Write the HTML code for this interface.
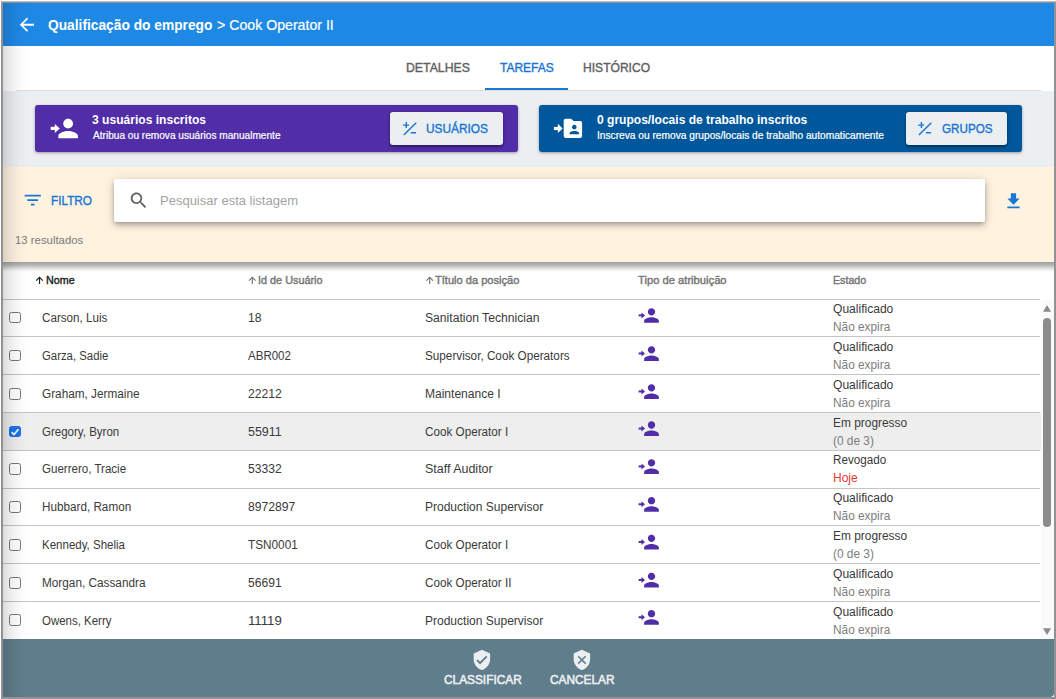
<!DOCTYPE html>
<html lang="pt"><head><meta charset="utf-8"><title>Qualificação do emprego</title>
<style>
html,body{margin:0;padding:0}
body{width:1056px;height:699px;overflow:hidden;background:#fff;position:relative;font-family:"Liberation Sans",sans-serif}
.a{position:absolute}
.t{position:absolute;white-space:nowrap;transform-origin:0 50%}
.m{-webkit-text-stroke:0.4px currentColor}
.card{position:absolute;top:105px;height:46.5px;border-radius:3px;box-shadow:0 1px 3px rgba(0,0,0,.35)}
.btn{position:absolute;top:112px;height:32.5px;border-radius:3px;background:#eceff1;box-shadow:0 2px 2px rgba(0,0,0,.3),0 1px 4px rgba(0,0,0,.2)}
.cb{position:absolute;left:9px;width:9.7px;height:9.7px;border:1px solid #767676;border-radius:2.5px;background:#fff}
.cb.on{background:#1a73e8;border-color:#1a73e8}
.line{position:absolute;left:3px;width:1037px;height:1px;background:#c4c4c4}
</style></head><body>

<div class="a" style="left:1px;top:1px;width:1055px;height:698px;background:#919196"></div>
<div class="a" style="left:1px;top:1px;width:1055px;height:1px;background:#b9babd"></div>
<div class="a" id="app" style="left:3px;top:3px;width:1051px;height:694px;background:#fff;overflow:hidden"></div>
<div class="a" style="left:3px;top:3px;width:1051px;height:43px;background:#1e88e5"></div>
<svg class="a" style="left:0;top:0" width="1056" height="699" viewBox="0 0 1056 699"><path fill="#fff" transform="translate(16.22,14.07) scale(0.89)" d="M20 11H7.830l5.590-5.590L12 4l-8 8 8 8 1.410-1.410L7.830 13H20v-2z"/></svg>
<div class="a" style="left:16px;top:90px;width:1025px;height:1px;background:#dedede"></div>
<div class="a" style="left:485px;top:88px;width:83px;height:2.4px;background:#1976d2"></div>
<div class="a" style="left:3px;top:91px;width:1051px;height:76px;background:#eceff1"></div>
<div class="card" style="left:35px;width:483px;background:#512da8"></div>
<div class="card" style="left:539px;width:483px;background:#01579b"></div>
<div class="btn" style="left:390px;width:113px"></div>
<div class="btn" style="left:906px;width:101px"></div>
<svg class="a" style="left:0;top:0" width="1056" height="699" viewBox="0 0 1056 699"><g stroke="#1976d2" stroke-width="1.45" fill="none" transform="translate(0,0)"><path d="M403 125.1H409.1M406.3 122V128.1M403.8 135.1L416.2 122.7M410.8 132.7H416"/></g></svg>
<svg class="a" style="left:0;top:0" width="1056" height="699" viewBox="0 0 1056 699"><g stroke="#1976d2" stroke-width="1.45" fill="none" transform="translate(515.1,0)"><path d="M403 125.1H409.1M406.3 122V128.1M403.8 135.1L416.2 122.7M410.8 132.7H416"/></g></svg>
<svg class="a" style="left:0;top:0" width="1056" height="699" viewBox="0 0 1056 699"><g fill="#fff"><path transform="translate(53.45,113.80) scale(1.225)" d="M12 12c2.21 0 4-1.79 4-4s-1.79-4-4-4-4 1.79-4 4 1.790 4 4 4zm0 2c-2.670 0-8 1.340-8 4v2h16v-2c0-2.660-5.330-4-8-4z"/><rect x="50.70" y="126.80" width="4.90" height="3.20"/><path d="M54.80 123.90L59.80 128.40L54.80 132.90z"/></g></svg>
<svg class="a" style="left:0;top:0" width="1056" height="699" viewBox="0 0 1056 699"><g fill="#fff"><path fill-rule="evenodd" d="M565.5 118.8H570.6Q571.4 118.8 572 119.4L573.5 120.9H580.3Q582.1 120.9 582.1 122.7V136.1Q582.1 137.9 580.3 137.9H565.5Q563.7 137.9 563.7 136.100V120.6Q563.7 118.8 565.5 118.8ZM574.3 124.8a2.300 2.300 0 1 0 0.001 0ZM569.6 134.2V133.3C569.6 131.8 572.7 131.1 574.3 131.1S579.1 131.8 579.1 133.3V134.2Z"/><rect x="553.9" y="126.9" width="4.8" height="3.2"/><path d="M557.9 123.8L562.6 128.4L557.9 133z"/></g></svg>
<div class="a" style="left:3px;top:167px;width:1051px;height:95px;background:#fff3e0"></div>
<div class="a" style="left:3px;top:262px;width:1051px;height:10px;background:linear-gradient(to bottom,rgba(0,0,0,.38),rgba(0,0,0,.29) 30%,rgba(0,0,0,.19) 52%,rgba(0,0,0,.08) 75%,rgba(0,0,0,.02) 92%,rgba(0,0,0,0))"></div>
<div class="a" style="left:114px;top:179px;width:871px;height:43px;background:#fff;border-radius:2px;box-shadow:0 2px 4px -1px rgba(0,0,0,.22),0 4px 6px 0 rgba(0,0,0,.16),0 1px 12px 0 rgba(0,0,0,.14)"></div>
<svg class="a" style="left:0;top:0" width="1056" height="699" viewBox="0 0 1056 699"><path fill="#1976d2" transform="translate(21.90,189.30) scale(0.9)" d="M10 18h4v-2h-4v2zM3 6v2h18V6H3zm3 7h12v-2H6v2z"/></svg>
<svg class="a" style="left:0;top:0" width="1056" height="699" viewBox="0 0 1056 699"><path fill="#616161" transform="translate(128.10,189.85) scale(0.883)" d="M15.5 14h-.79l-.28-.27C15.41 12.59 16 11.11 16 9.5 16 5.91 13.09 3 9.5 3S3 5.91 3 9.5 5.91 16 9.5 16c1.61 0 3.09-.59 4.23-1.57l.27.28v.79l5 4.99L20.49 19l-4.99-5zm-6 0C7.01 14 5 11.99 5 9.5S7.01 5 9.5 5 14 7.01 14 9.5 11.99 14 9.500 14z"/></svg>
<svg class="a" style="left:0;top:0" width="1056" height="699" viewBox="0 0 1056 699"><path fill="#1976d2" transform="translate(1002.90,190.66) scale(0.88)" d="M19 9h-4V3H9v6H5l7 7 7-7zM5 18v2h14v-2H5z"/></svg>
<svg class="a" style="left:0;top:0" width="1056" height="699" viewBox="0 0 1056 699"><path d="M39.5 284V277.3M36.2 280.7L39.5 277.3L42.8 280.7" stroke="#212121" stroke-width="1.15" fill="none"/><path d="M252.3 284V277.3M249.0 280.7L252.3 277.3L255.60000000000002 280.7" stroke="#757575" stroke-width="1.15" fill="none"/><path d="M429.7 284V277.3M426.4 280.7L429.7 277.3L433.0 280.7" stroke="#757575" stroke-width="1.15" fill="none"/></svg>
<div class="line" style="top:299px"></div>
<div class="line" style="top:336px"></div>
<div class="cb" style="top:311.8px"></div>
<svg class="a" style="left:0;top:0" width="1056" height="699" viewBox="0 0 1056 699"><g fill="#512da8"><path transform="translate(640.46,304.45) scale(0.92)" d="M12 12c2.21 0 4-1.79 4-4s-1.79-4-4-4-4 1.79-4 4 1.790 4 4 4zm0 2c-2.670 0-8 1.340-8 4v2h16v-2c0-2.660-5.330-4-8-4z"/><rect x="638.60" y="314.40" width="3.70" height="2.00"/><path d="M641.50 312.40L645.00 315.40L641.50 318.40z"/></g></svg>
<div class="line" style="top:374px"></div>
<div class="cb" style="top:349.8px"></div>
<svg class="a" style="left:0;top:0" width="1056" height="699" viewBox="0 0 1056 699"><g fill="#512da8"><path transform="translate(640.46,342.50) scale(0.92)" d="M12 12c2.21 0 4-1.79 4-4s-1.79-4-4-4-4 1.79-4 4 1.790 4 4 4zm0 2c-2.670 0-8 1.340-8 4v2h16v-2c0-2.660-5.330-4-8-4z"/><rect x="638.60" y="352.45" width="3.70" height="2.00"/><path d="M641.50 350.45L645.00 353.45L641.50 356.45z"/></g></svg>
<div class="line" style="top:412px"></div>
<div class="cb" style="top:387.9px"></div>
<svg class="a" style="left:0;top:0" width="1056" height="699" viewBox="0 0 1056 699"><g fill="#512da8"><path transform="translate(640.46,380.50) scale(0.92)" d="M12 12c2.21 0 4-1.79 4-4s-1.79-4-4-4-4 1.79-4 4 1.790 4 4 4zm0 2c-2.670 0-8 1.340-8 4v2h16v-2c0-2.660-5.330-4-8-4z"/><rect x="638.60" y="390.45" width="3.70" height="2.00"/><path d="M641.50 388.45L645.00 391.45L641.50 394.45z"/></g></svg>
<div class="a" style="left:3px;top:413px;width:1037.5px;height:37px;background:#eeeeee"></div>
<div class="line" style="top:450px"></div>
<div class="cb on" style="top:425.7px"></div>
<svg class="a" style="left:9px;top:425.7px" width="12" height="12" viewBox="0 0 12 12"><path d="M2.6 6.200L5 8.600L9.5 3.300" stroke="#fff" stroke-width="1.7" fill="none"/></svg>
<svg class="a" style="left:0;top:0" width="1056" height="699" viewBox="0 0 1056 699"><g fill="#512da8"><path transform="translate(640.46,417.60) scale(0.92)" d="M12 12c2.21 0 4-1.79 4-4s-1.79-4-4-4-4 1.79-4 4 1.790 4 4 4zm0 2c-2.670 0-8 1.340-8 4v2h16v-2c0-2.660-5.330-4-8-4z"/><rect x="638.60" y="427.55" width="3.70" height="2.00"/><path d="M641.50 425.55L645.00 428.55L641.50 431.55z"/></g></svg>
<div class="line" style="top:488px"></div>
<div class="cb" style="top:463.4px"></div>
<svg class="a" style="left:0;top:0" width="1056" height="699" viewBox="0 0 1056 699"><g fill="#512da8"><path transform="translate(640.46,455.50) scale(0.92)" d="M12 12c2.21 0 4-1.79 4-4s-1.79-4-4-4-4 1.79-4 4 1.790 4 4 4zm0 2c-2.670 0-8 1.340-8 4v2h16v-2c0-2.660-5.330-4-8-4z"/><rect x="638.60" y="465.45" width="3.70" height="2.00"/><path d="M641.50 463.45L645.00 466.45L641.50 469.45z"/></g></svg>
<div class="line" style="top:525px"></div>
<div class="cb" style="top:500.9px"></div>
<svg class="a" style="left:0;top:0" width="1056" height="699" viewBox="0 0 1056 699"><g fill="#512da8"><path transform="translate(640.46,493.30) scale(0.92)" d="M12 12c2.21 0 4-1.79 4-4s-1.79-4-4-4-4 1.79-4 4 1.790 4 4 4zm0 2c-2.670 0-8 1.340-8 4v2h16v-2c0-2.660-5.330-4-8-4z"/><rect x="638.60" y="503.25" width="3.70" height="2.00"/><path d="M641.50 501.25L645.00 504.25L641.50 507.25z"/></g></svg>
<div class="line" style="top:563px"></div>
<div class="cb" style="top:539.0px"></div>
<svg class="a" style="left:0;top:0" width="1056" height="699" viewBox="0 0 1056 699"><g fill="#512da8"><path transform="translate(640.46,531.00) scale(0.92)" d="M12 12c2.21 0 4-1.79 4-4s-1.79-4-4-4-4 1.79-4 4 1.790 4 4 4zm0 2c-2.670 0-8 1.340-8 4v2h16v-2c0-2.660-5.330-4-8-4z"/><rect x="638.60" y="540.95" width="3.70" height="2.00"/><path d="M641.50 538.95L645.00 541.95L641.50 544.95z"/></g></svg>
<div class="line" style="top:601px"></div>
<div class="cb" style="top:576.9px"></div>
<svg class="a" style="left:0;top:0" width="1056" height="699" viewBox="0 0 1056 699"><g fill="#512da8"><path transform="translate(640.46,569.00) scale(0.92)" d="M12 12c2.21 0 4-1.79 4-4s-1.79-4-4-4-4 1.79-4 4 1.790 4 4 4zm0 2c-2.670 0-8 1.340-8 4v2h16v-2c0-2.660-5.330-4-8-4z"/><rect x="638.60" y="578.95" width="3.70" height="2.00"/><path d="M641.50 576.95L645.00 579.95L641.50 582.95z"/></g></svg>
<div class="cb" style="top:614.4px"></div>
<svg class="a" style="left:0;top:0" width="1056" height="699" viewBox="0 0 1056 699"><g fill="#512da8"><path transform="translate(640.46,606.30) scale(0.92)" d="M12 12c2.21 0 4-1.79 4-4s-1.79-4-4-4-4 1.79-4 4 1.790 4 4 4zm0 2c-2.670 0-8 1.340-8 4v2h16v-2c0-2.660-5.330-4-8-4z"/><rect x="638.60" y="616.25" width="3.70" height="2.00"/><path d="M641.50 614.25L645.00 617.25L641.50 620.25z"/></g></svg>
<div class="a" style="left:1040.5px;top:300px;width:13.500px;height:339px;background:#fafafa"></div>
<div class="a" style="left:1043px;top:318px;width:8px;height:209px;border-radius:4px;background:#8b8b8b"></div>
<svg class="a" style="left:0;top:0" width="1056" height="699" viewBox="0 0 1056 699"><path fill="#8b8b8b" d="M1043 311.7L1047 305L1051.100 311.7zM1043 628.2L1047 635L1051.100 628.2z"/></svg>
<div class="a" style="left:1048px;top:691px;width:6px;height:6px;background:#fff"></div>
<div class="a" style="left:3px;top:639px;width:1051px;height:58px;background:#607d8b;border-radius:0 0 4px 0"></div>
<svg class="a" style="left:0;top:0" width="1056" height="699" viewBox="0 0 1056 699"><g fill="#eceff1" fill-rule="evenodd"><path transform="translate(470.92,648.88) scale(0.915)" d="M12 1L3 5v6c0 5.550 3.840 10.740 9 12 5.160-1.260 9-6.450 9-12V5l-9-4zm-2 16l-4-4 1.410-1.410L10 14.170l6.590-6.590L18 9l-8 8z"/><path transform="translate(570.92,648.88) scale(0.915)" d="M12 1L3 5v6c0 5.550 3.840 10.740 9 12 5.160-1.260 9-6.450 9-12V5l-9-4z"/></g><path d="M578.2 656.2L585.6 663.6M585.6 656.2L578.2 663.600" stroke="#607d8b" stroke-width="1.5" fill="none"/></svg>
<div class="t" style="left:47.7px;top:16px;font-size:14.5px;line-height:18px;color:#ffffff;transform:scaleX(0.9489);font-weight:700;">Qualificação do emprego</div>
<div class="t" style="left:216.8px;top:16px;font-size:14.5px;line-height:18px;color:#ffffff;transform:scaleX(0.9759);-webkit-text-stroke:0.2px currentColor;">> Cook Operator II</div>
<div class="t m" style="left:406.4px;top:59px;font-size:13px;line-height:17px;color:#616161;transform:scaleX(0.9443);">DETALHES</div>
<div class="t m" style="left:500.2px;top:59px;font-size:13px;line-height:17px;color:#1976d2;transform:scaleX(0.9214);">TAREFAS</div>
<div class="t m" style="left:583.4px;top:59px;font-size:13px;line-height:17px;color:#616161;transform:scaleX(0.9289);">HISTÓRICO</div>
<div class="t" style="left:92.4px;top:111px;font-size:13px;line-height:17px;color:#ffffff;transform:scaleX(0.9281);font-weight:700;">3 usuários inscritos</div>
<div class="t" style="left:93.0px;top:129px;font-size:10px;line-height:13px;color:#ffffff;transform:scaleX(1.0099);-webkit-text-stroke:0.2px currentColor;">Atribua ou remova usuários manualmente</div>
<div class="t m" style="left:425.8px;top:120px;font-size:13px;line-height:17px;color:#1976d2;transform:scaleX(0.9130);">USUÁRIOS</div>
<div class="t" style="left:597.3px;top:111px;font-size:13px;line-height:17px;color:#ffffff;transform:scaleX(0.9266);font-weight:700;">0 grupos/locais de trabalho inscritos</div>
<div class="t" style="left:597.3px;top:129px;font-size:10px;line-height:13px;color:#ffffff;transform:scaleX(1.0184);-webkit-text-stroke:0.2px currentColor;">Inscreva ou remova grupos/locais de trabalho automaticamente</div>
<div class="t m" style="left:941.7px;top:120px;font-size:13px;line-height:17px;color:#1976d2;transform:scaleX(0.8963);">GRUPOS</div>
<div class="t m" style="left:50.5px;top:192px;font-size:13px;line-height:17px;color:#1976d2;transform:scaleX(0.9058);">FILTRO</div>
<div class="t" style="left:159.5px;top:192px;font-size:13px;line-height:17px;color:#a3a3a3;transform:scaleX(0.9999);">Pesquisar esta listagem</div>
<div class="t" style="left:14.7px;top:233px;font-size:11px;line-height:14px;color:#7a7a7a;transform:scaleX(1.0326);">13 resultados</div>
<div class="t m" style="left:45.8px;top:273px;font-size:11px;line-height:14px;color:#212121;transform:scaleX(0.9747);">Nome</div>
<div class="t m" style="left:258.4px;top:273px;font-size:11px;line-height:14px;color:#757575;transform:scaleX(0.9857);">Id de Usuário</div>
<div class="t m" style="left:435.4px;top:273px;font-size:11px;line-height:14px;color:#757575;transform:scaleX(1.0074);">Título da posição</div>
<div class="t m" style="left:637.9px;top:273px;font-size:11px;line-height:14px;color:#757575;transform:scaleX(1.0178);">Tipo de atribuição</div>
<div class="t m" style="left:832.5px;top:273px;font-size:11px;line-height:14px;color:#757575;transform:scaleX(0.9693);">Estado</div>
<div class="t" style="left:42.2px;top:310px;font-size:12px;line-height:16px;color:#3a3a3a;transform:scaleX(0.9699);">Carson, Luis</div>
<div class="t" style="left:248.3px;top:310px;font-size:12px;line-height:16px;color:#3a3a3a;transform:scaleX(1.0105);">18</div>
<div class="t" style="left:425.0px;top:310px;font-size:12px;line-height:16px;color:#3a3a3a;transform:scaleX(1.0110);">Sanitation Technician</div>
<div class="t" style="left:832.5px;top:301px;font-size:12px;line-height:16px;color:#3a3a3a;transform:scaleX(1.0044);">Qualificado</div>
<div class="t" style="left:832.5px;top:319px;font-size:12px;line-height:16px;color:#7d7d7d;transform:scaleX(0.9865);">Não expira</div>
<div class="t" style="left:42.2px;top:348px;font-size:12px;line-height:16px;color:#3a3a3a;transform:scaleX(0.9465);">Garza, Sadie</div>
<div class="t" style="left:248.3px;top:348px;font-size:12px;line-height:16px;color:#3a3a3a;transform:scaleX(0.9605);">ABR002</div>
<div class="t" style="left:425.0px;top:348px;font-size:12px;line-height:16px;color:#3a3a3a;transform:scaleX(0.9769);">Supervisor, Cook Operators</div>
<div class="t" style="left:832.5px;top:339px;font-size:12px;line-height:16px;color:#3a3a3a;transform:scaleX(1.0044);">Qualificado</div>
<div class="t" style="left:832.5px;top:357px;font-size:12px;line-height:16px;color:#7d7d7d;transform:scaleX(0.9865);">Não expira</div>
<div class="t" style="left:42.2px;top:386px;font-size:12px;line-height:16px;color:#3a3a3a;transform:scaleX(0.9816);">Graham, Jermaine</div>
<div class="t" style="left:248.3px;top:386px;font-size:12px;line-height:16px;color:#3a3a3a;transform:scaleX(1.0108);">22212</div>
<div class="t" style="left:425.0px;top:386px;font-size:12px;line-height:16px;color:#3a3a3a;transform:scaleX(1.0017);">Maintenance I</div>
<div class="t" style="left:832.5px;top:377px;font-size:12px;line-height:16px;color:#3a3a3a;transform:scaleX(1.0044);">Qualificado</div>
<div class="t" style="left:832.5px;top:395px;font-size:12px;line-height:16px;color:#7d7d7d;transform:scaleX(0.9865);">Não expira</div>
<div class="t" style="left:42.2px;top:424px;font-size:12px;line-height:16px;color:#3a3a3a;transform:scaleX(0.9594);">Gregory, Byron</div>
<div class="t" style="left:248.3px;top:424px;font-size:12px;line-height:16px;color:#3a3a3a;transform:scaleX(1.0385);">55911</div>
<div class="t" style="left:425.0px;top:424px;font-size:12px;line-height:16px;color:#3a3a3a;transform:scaleX(0.9749);">Cook Operator I</div>
<div class="t" style="left:832.5px;top:415px;font-size:12px;line-height:16px;color:#3a3a3a;transform:scaleX(0.9925);">Em progresso</div>
<div class="t" style="left:832.5px;top:433px;font-size:12px;line-height:16px;color:#7d7d7d;transform:scaleX(0.9879);">(0 de 3)</div>
<div class="t" style="left:42.2px;top:461px;font-size:12px;line-height:16px;color:#3a3a3a;transform:scaleX(0.9623);">Guerrero, Tracie</div>
<div class="t" style="left:248.3px;top:461px;font-size:12px;line-height:16px;color:#3a3a3a;transform:scaleX(1.0108);">53332</div>
<div class="t" style="left:425.0px;top:461px;font-size:12px;line-height:16px;color:#3a3a3a;transform:scaleX(1.0388);">Staff Auditor</div>
<div class="t" style="left:832.5px;top:452px;font-size:12px;line-height:16px;color:#3a3a3a;transform:scaleX(0.9712);">Revogado</div>
<div class="t" style="left:832.5px;top:470px;font-size:12px;line-height:16px;color:#e53935;transform:scaleX(0.9981);">Hoje</div>
<div class="t" style="left:42.2px;top:499px;font-size:12px;line-height:16px;color:#3a3a3a;transform:scaleX(0.9756);">Hubbard, Ramon</div>
<div class="t" style="left:248.3px;top:499px;font-size:12px;line-height:16px;color:#3a3a3a;transform:scaleX(1.0107);">8972897</div>
<div class="t" style="left:425.0px;top:499px;font-size:12px;line-height:16px;color:#3a3a3a;transform:scaleX(1.0009);">Production Supervisor</div>
<div class="t" style="left:832.5px;top:490px;font-size:12px;line-height:16px;color:#3a3a3a;transform:scaleX(1.0044);">Qualificado</div>
<div class="t" style="left:832.5px;top:508px;font-size:12px;line-height:16px;color:#7d7d7d;transform:scaleX(0.9865);">Não expira</div>
<div class="t" style="left:42.2px;top:537px;font-size:12px;line-height:16px;color:#3a3a3a;transform:scaleX(0.9592);">Kennedy, Shelia</div>
<div class="t" style="left:248.3px;top:537px;font-size:12px;line-height:16px;color:#3a3a3a;transform:scaleX(0.9809);">TSN0001</div>
<div class="t" style="left:425.0px;top:537px;font-size:12px;line-height:16px;color:#3a3a3a;transform:scaleX(0.9749);">Cook Operator I</div>
<div class="t" style="left:832.5px;top:528px;font-size:12px;line-height:16px;color:#3a3a3a;transform:scaleX(0.9925);">Em progresso</div>
<div class="t" style="left:832.5px;top:546px;font-size:12px;line-height:16px;color:#7d7d7d;transform:scaleX(0.9879);">(0 de 3)</div>
<div class="t" style="left:42.2px;top:575px;font-size:12px;line-height:16px;color:#3a3a3a;transform:scaleX(0.9822);">Morgan, Cassandra</div>
<div class="t" style="left:248.3px;top:575px;font-size:12px;line-height:16px;color:#3a3a3a;transform:scaleX(1.0108);">56691</div>
<div class="t" style="left:425.0px;top:575px;font-size:12px;line-height:16px;color:#3a3a3a;transform:scaleX(0.9750);">Cook Operator II</div>
<div class="t" style="left:832.5px;top:566px;font-size:12px;line-height:16px;color:#3a3a3a;transform:scaleX(1.0044);">Qualificado</div>
<div class="t" style="left:832.5px;top:584px;font-size:12px;line-height:16px;color:#7d7d7d;transform:scaleX(0.9865);">Não expira</div>
<div class="t" style="left:42.2px;top:613px;font-size:12px;line-height:16px;color:#3a3a3a;transform:scaleX(0.9555);">Owens, Kerry</div>
<div class="t" style="left:248.3px;top:613px;font-size:12px;line-height:16px;color:#3a3a3a;transform:scaleX(1.0987);">11119</div>
<div class="t" style="left:425.0px;top:613px;font-size:12px;line-height:16px;color:#3a3a3a;transform:scaleX(1.0009);">Production Supervisor</div>
<div class="t" style="left:832.5px;top:604px;font-size:12px;line-height:16px;color:#3a3a3a;transform:scaleX(1.0044);">Qualificado</div>
<div class="t" style="left:832.5px;top:622px;font-size:12px;line-height:16px;color:#7d7d7d;transform:scaleX(0.9865);">Não expira</div>
<div class="t" style="left:443.7px;top:672px;font-size:12.5px;line-height:16px;color:#eceff1;transform:scaleX(0.9479);-webkit-text-stroke:0.55px currentColor;">CLASSIFICAR</div>
<div class="t" style="left:550.0px;top:672px;font-size:12.5px;line-height:16px;color:#eceff1;transform:scaleX(0.9489);-webkit-text-stroke:0.55px currentColor;">CANCELAR</div>
<div class="a" style="left:3px;top:3px;width:25px;height:694px;background:linear-gradient(to right,rgba(0,0,0,.14) 0,rgba(0,0,0,.09) 20%,rgba(0,0,0,.05) 44%,rgba(0,0,0,.02) 68%,rgba(0,0,0,0) 100%)"></div>
</body></html>
